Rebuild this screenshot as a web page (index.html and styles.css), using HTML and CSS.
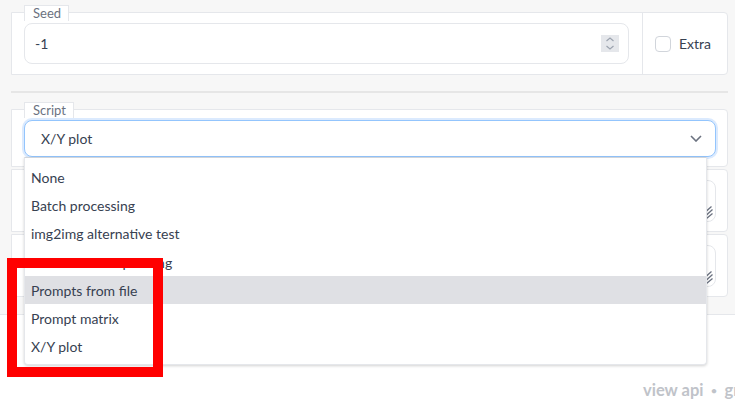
FILE: index.html
```html
<!DOCTYPE html>
<html>
<head>
<meta charset="utf-8">
<link rel="stylesheet" href="styles.css">
</head>
<body>
<div class="panel">
  <div class="block form-row">
    <div class="cell cell-seed">
      <span class="tab">Seed</span>
      <div class="num-input">
        <span class="num-val">-1</span>
        <svg class="spin" width="18" height="17" viewBox="0 0 18 17">
          <rect width="18" height="17" fill="#e5e7eb"/>
          <path d="M5.5 6 L9 3 L12.5 6" fill="none" stroke="#9ca3af" stroke-width="1.2"/>
          <path d="M5.5 11 L9 14 L12.5 11" fill="none" stroke="#9ca3af" stroke-width="1.2"/>
        </svg>
      </div>
    </div>
    <div class="cell cell-extra">
      <label class="check"><span class="box"></span><span class="check-text">Extra</span></label>
    </div>
  </div>

  <div class="divider"></div>

  <div class="block script-block">
    <span class="tab">Script</span>
    <div class="select">
      <span>X/Y plot</span>
      <svg class="chev" width="12" height="7" viewBox="0 0 12 7">
        <path d="M1 1 L6 6 L11 1" fill="none" stroke="#6b7280" stroke-width="1.6"/>
      </svg>
    </div>
    <ul class="options">
      <li>None</li>
      <li>Batch processing</li>
      <li>img2img alternative test</li>
      <li>Poor man's outpainting</li>
      <li class="active">Prompts from file</li>
      <li>Prompt matrix</li>
      <li>X/Y plot</li>
    </ul>
  </div>

  <div class="block ta-block ta-one">
    <div class="textarea">
      <svg class="grip" width="7" height="13" viewBox="0 0 7 13">
        <path d="M0.5 5 L5.5 0.5 M0.5 9 L6.5 3.5 M0.5 12.5 L6.5 7.5" stroke="#6b7280" stroke-width="1.3" fill="none"/>
      </svg>
    </div>
  </div>
  <div class="block ta-block ta-two">
    <div class="textarea">
      <svg class="grip" width="7" height="13" viewBox="0 0 7 13">
        <path d="M0.5 5 L5.5 0.5 M0.5 9 L6.5 3.5 M0.5 12.5 L6.5 7.5" stroke="#6b7280" stroke-width="1.3" fill="none"/>
      </svg>
    </div>
  </div>
</div>

<footer class="footer">
  <span class="foot-link">view api</span>
  <span class="foot-dot">•</span>
  <span class="foot-link">gr</span>
</footer>

<div class="annot"></div>
</body>
</html>
```

FILE: styles.css
```css
* { box-sizing: border-box; }

html, body {
  margin: 0;
  padding: 0;
  background: #ffffff;
  overflow: hidden;
  width: 735px;
  height: 413px;
  font-family: "Lato", "Noto Sans", sans-serif;
  color: #374151;
}

body { position: relative; }

.panel {
  background: #f7f7f7;
  height: 315px;
  padding: 12px 7px 0 11px;
  border-bottom: 1px solid #e5e7eb;
}

.block {
  position: relative;
  background: #ffffff;
  border: 1px solid #e5e7eb;
  border-radius: 0 4px 4px 0;
}

.tab {
  position: absolute;
  top: -8px;
  left: 12px;
  height: 16px;
  padding: 0 7px 0 8px;
  background: #ffffff;
  border: 1px solid #e5e7eb;
  border-bottom: none;
  font-size: 13px;
  line-height: 15px;
  color: #6b7280;
}

.form-row {
  display: flex;
  height: 63px;
}

.cell-seed {
  flex: 1;
  padding: 10px 13px 10px 12px;
}

.num-input {
  height: 41px;
  border: 1px solid #e5e7eb;
  border-radius: 8px;
  background: #fff;
  display: flex;
  align-items: center;
  justify-content: space-between;
  padding: 0 9px 0 10px;
  font-size: 14px;
}

.spin { display: block; }

.cell-extra {
  width: 85px;
  border-left: 1px solid #e5e7eb;
  display: flex;
  align-items: center;
  padding-left: 12px;
}

.check {
  display: flex;
  align-items: center;
  gap: 8px;
  font-size: 14px;
  color: #374151;
}

.box {
  width: 16px;
  height: 16px;
  border: 1px solid #d1d5db;
  border-radius: 4px;
  background: #fff;
}

.divider {
  height: 2px;
  background: #e6e6e6;
  margin: 16px 0 16px 0;
}

.script-block {
  padding: 10px 11px 9px 12px;
}

.select {
  height: 37px;
  border: 1px solid #93c5fd;
  border-radius: 8px;
  box-shadow: 0 0 0 2px #dbeafe;
  display: flex;
  align-items: center;
  justify-content: space-between;
  padding: 0 13px 0 16px;
  font-size: 14px;
  color: #374151;
  background: #fff;
}

.chev { display: block; }

.options {
  position: absolute;
  top: 47px;
  left: 12px;
  width: 683px;
  height: 208px;
  margin: 0;
  padding: 5px 0 4px 0;
  list-style: none;
  background: #ffffff;
  border: 1px solid #e5e7eb;
  border-top-color: #d1d5db;
  border-radius: 0 0 4px 4px;
  box-shadow: 0 1px 3px rgba(0, 0, 0, 0.18);
  z-index: 5;
}

.options li {
  height: 28.3px;
  display: flex;
  align-items: center;
  padding-left: 6px;
  font-size: 14px;
  color: #374151;
}

.options li.active {
  background: #dfe0e4;
}

.ta-block {
  margin-top: 2px;
  padding: 10px 11px 9px 12px;
}

.textarea {
  position: relative;
  height: 42px;
  border: 1px solid #e5e7eb;
  border-radius: 8px;
  background: #fff;
}

.grip {
  position: absolute;
  right: 2px;
  bottom: 2px;
}

.footer {
  display: flex;
  align-items: center;
  gap: 7px;
  white-space: nowrap;
  padding: 65px 0 0 643px;
  font-size: 16.5px;
  font-weight: 700;
  color: #c0c3c9;
}

.foot-dot { font-weight: 400; font-size: 12px; }

.annot {
  position: absolute;
  left: 7px;
  top: 258px;
  width: 156px;
  height: 119px;
  border: 10px solid #ff0000;
  z-index: 10;
}
```
